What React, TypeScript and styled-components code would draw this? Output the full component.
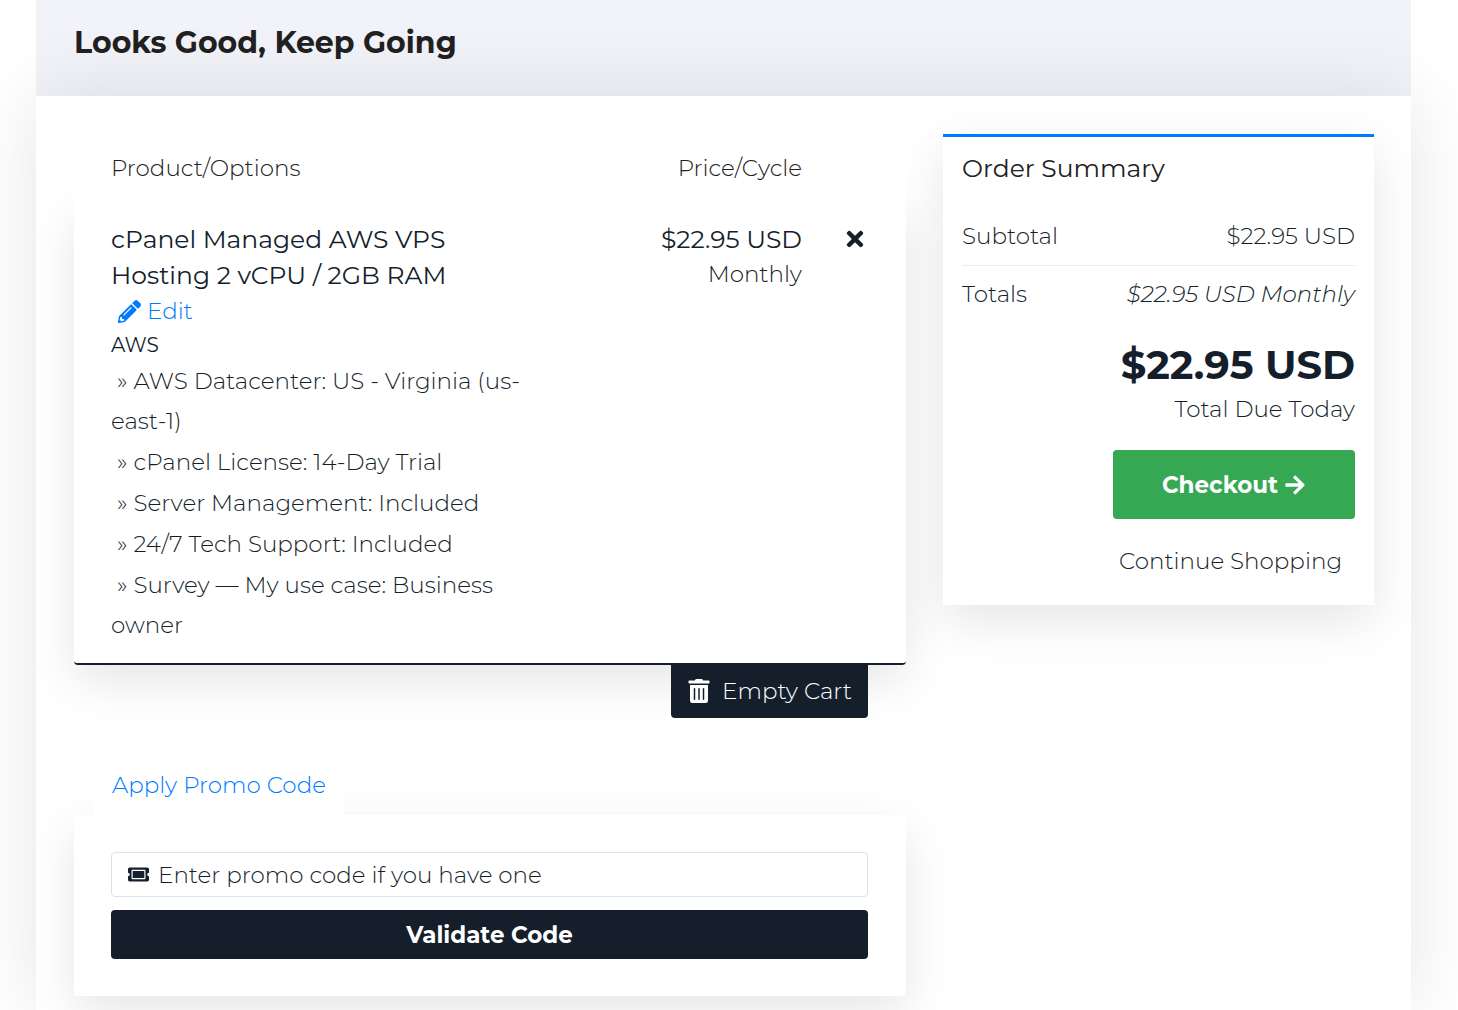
import React from "react";
import styled, { createGlobalStyle } from "styled-components";
import {
  FaArrowRight,
  FaPencilAlt,
  FaTicketAlt,
  FaTimes,
  FaTrashAlt,
} from "react-icons/fa";

const ink = "#151f2c";
const blue = "#007bff";
const cardShadow = "0 16px 48px rgba(0, 0, 0, 0.1)";

const GlobalStyle = createGlobalStyle`
  *, *::before, *::after { box-sizing: border-box; }
  html { overflow-x: hidden; }
  body {
    margin: 0;
    background: #fff;
    color: ${ink};
    font-family: Montserrat, Inter, "Open Sans", sans-serif;
    font-size: 23px;
    font-weight: 300;
    line-height: 34px;
  }
  h1, h2, h3, p, ul, dl, dd { margin: 0; padding: 0; }
  button, input { font: inherit; color: inherit; }
  svg { display: block; flex: none; }
`;

const Page = styled.div`
  min-height: 100vh;
  padding: 0 47px 0 36px;
  display: flex;
  flex-direction: column;
  overflow: hidden;
`;

const PageHeader = styled.header`
  padding: 25px 38px 35px;
  background: #f1f3f8;
`;

const PageTitle = styled.h1`
  font-size: 30px;
  font-weight: 700;
  line-height: 36px;
  color: #212121;
`;

const Body = styled.main`
  flex: 1;
  display: grid;
  grid-template-columns: minmax(0, 832fr) minmax(0, 431fr);
  gap: 37px;
  align-items: start;
  padding: 38px 37px 14px 38px;
  background: #fff;
  box-shadow: 0 0 72px rgba(0, 0, 0, 0.1);
  @media (max-width: 900px) {
    grid-template-columns: minmax(0, 1fr);
  }
`;

const CartColumn = styled.section`
  display: flex;
  flex-direction: column;
`;

const CartTable = styled.table`
  display: block;
`;

const CartHead = styled.thead`
  display: block;
  position: relative;
  z-index: 1;
  background: #fff;
`;

const CartBody = styled.tbody`
  display: block;
  border-bottom: 2px solid ${ink};
  border-radius: 4px;
  background: #fff;
  box-shadow: ${cardShadow};
`;

const CartRow = styled.tr<{ $pad: string }>`
  display: grid;
  grid-template-columns: minmax(0, 415fr) minmax(0, 276fr) 67px;
  padding: ${(p) => p.$pad};
`;

const HeadCell = styled.th<{ $end?: boolean }>`
  padding: 0;
  font-weight: 300;
  text-align: ${(p) => (p.$end ? "right" : "left")};
  color: #212121;
`;

const Cell = styled.td<{ $end?: boolean }>`
  padding: 0;
  text-align: ${(p) => (p.$end ? "right" : "left")};
`;

const ProductName = styled.h2`
  font-size: 25px;
  font-weight: 400;
  line-height: 36px;
`;

const Price = styled.div`
  font-size: 25px;
  font-weight: 400;
  line-height: 36px;
`;

const EditLink = styled.a`
  display: inline-flex;
  align-items: center;
  gap: 6px;
  padding-left: 7px;
  line-height: 36px;
  vertical-align: top;
  color: ${blue};
  text-decoration: none;
`;

const Group = styled.p`
  font-size: 20px;
  font-weight: 400;
  line-height: 32px;
`;

const Options = styled.ul`
  display: flex;
  flex-direction: column;
  gap: 1px;
  list-style: none;
  line-height: 40px;
  li::before {
    content: "»";
    padding: 0 6px;
  }
`;

const RemoveButton = styled.button`
  display: flex;
  margin-left: auto;
  padding: 6px 2px;
  border: 0;
  background: none;
  font-size: 24px;
  cursor: pointer;
`;

const EmptyButton = styled.button`
  display: flex;
  align-items: center;
  justify-content: center;
  gap: 11px;
  align-self: flex-end;
  width: 197px;
  margin-right: 38px;
  padding: 9px 0 10px;
  border: 0;
  border-radius: 0 0 4px 4px;
  position: relative;
  background: ${ink};
  color: #fff;
  cursor: pointer;
`;

const PromoTab = styled.a`
  position: relative;
  z-index: 1;
  align-self: flex-start;
  margin: 37px 0 0 19px;
  padding: 13px 18px 13px 19px;
  background: #fff;
  color: ${blue};
  text-decoration: none;
`;

const PromoCard = styled.form`
  display: flex;
  flex-direction: column;
  gap: 13px;
  padding: 37px 38px 37px 37px;
  border-radius: 4px;
  background: #fff;
  box-shadow: ${cardShadow};
`;

const PromoField = styled.label`
  display: flex;
  align-items: center;
  gap: 9px;
  height: 45px;
  padding: 0 16px;
  border: 1px solid #dee2e6;
  border-radius: 4px;
`;

const PromoInput = styled.input`
  flex: 1;
  min-width: 0;
  padding: 0;
  border: 0;
  outline: 0;
  background: none;
  &::placeholder {
    color: ${ink};
    opacity: 1;
  }
`;

const ValidateButton = styled.button`
  height: 49px;
  padding: 0;
  border: 0;
  border-radius: 4px;
  background: ${ink};
  color: #fff;
  font-weight: 700;
  cursor: pointer;
`;

const Summary = styled.aside`
  display: flex;
  flex-direction: column;
  padding: 13px 19px 27px;
  border-top: 3px solid ${blue};
  background: #fff;
  box-shadow: ${cardShadow};
`;

const SummaryTitle = styled.h2`
  margin-bottom: 21px;
  font-size: 25px;
  font-weight: 400;
  line-height: 36px;
  color: #212121;
`;

const SummaryLine = styled.dl<{ $ruled?: boolean }>`
  display: flex;
  justify-content: space-between;
  padding: ${(p) => (p.$ruled ? "12px 0" : "11px 0")};
  border-bottom: ${(p) => (p.$ruled ? "1px solid #ebebeb" : "0")};
`;

const Recurring = styled.em`
  font-style: italic;
`;

const TotalDue = styled.div`
  padding-top: 16px;
  text-align: right;
`;

const TotalAmount = styled.div`
  font-size: 40px;
  font-weight: 700;
  line-height: 54px;
`;

const Actions = styled.div`
  display: flex;
  flex-direction: column;
  align-self: flex-end;
  width: 242px;
  padding-top: 24px;
  gap: 25px;
`;

const CheckoutButton = styled.button`
  display: flex;
  align-items: center;
  justify-content: center;
  gap: 6px;
  height: 69px;
  padding: 0;
  border: 0;
  border-radius: 4px;
  background: #36a853;
  color: #fff;
  font-weight: 700;
  cursor: pointer;
`;

const ContinueLink = styled.a`
  padding: 0 16px 0 6px;
  white-space: nowrap;
  color: inherit;
  text-decoration: none;
`;

const options = [
  "AWS Datacenter: US - Virginia (us-east-1)",
  "cPanel License: 14-Day Trial",
  "Server Management: Included",
  "24/7 Tech Support: Included",
  "Survey — My use case: Business owner",
];

export default function App() {
  return (
    <>
      <GlobalStyle />
      <Page>
        <PageHeader>
          <PageTitle>Looks Good, Keep Going</PageTitle>
        </PageHeader>
        <Body>
          <CartColumn>
            <CartTable>
              <CartHead>
                <CartRow $pad="17px 37px 20px">
                  <HeadCell scope="col">Product/Options</HeadCell>
                  <HeadCell scope="col" $end>
                    Price/Cycle
                  </HeadCell>
                </CartRow>
              </CartHead>
              <CartBody>
                <CartRow $pad="16px 37px 18px">
                  <Cell>
                    <ProductName>
                      cPanel Managed AWS VPS Hosting 2 vCPU / 2GB RAM
                    </ProductName>
                    <EditLink href="#edit">
                      <FaPencilAlt size={23} />
                      Edit
                    </EditLink>
                    <Group>AWS</Group>
                    <Options>
                      {options.map((option) => (
                        <li key={option}>{option}</li>
                      ))}
                    </Options>
                  </Cell>
                  <Cell $end>
                    <Price>$22.95 USD</Price>
                    Monthly
                  </Cell>
                  <Cell>
                    <RemoveButton type="button" aria-label="Remove item">
                      <FaTimes />
                    </RemoveButton>
                  </Cell>
                </CartRow>
              </CartBody>
            </CartTable>
            <EmptyButton type="button">
              <FaTrashAlt size={24} />
              Empty Cart
            </EmptyButton>

            <PromoTab href="#promo">Apply Promo Code</PromoTab>
            <PromoCard id="promo" onSubmit={(e) => e.preventDefault()}>
              <PromoField>
                <FaTicketAlt size={21} />
                <PromoInput
                  type="text"
                  name="promocode"
                  aria-label="Promo code"
                  placeholder="Enter promo code if you have one"
                />
              </PromoField>
              <ValidateButton type="submit">Validate Code</ValidateButton>
            </PromoCard>
          </CartColumn>

          <Summary>
            <SummaryTitle>Order Summary</SummaryTitle>
            <SummaryLine $ruled>
              <dt>Subtotal</dt>
              <dd>$22.95 USD</dd>
            </SummaryLine>
            <SummaryLine>
              <dt>Totals</dt>
              <dd>
                <Recurring>$22.95 USD Monthly</Recurring>
              </dd>
            </SummaryLine>
            <TotalDue>
              <TotalAmount>$22.95 USD</TotalAmount>
              Total Due Today
            </TotalDue>
            <Actions>
              <CheckoutButton type="button">
                Checkout
                <FaArrowRight size={22} />
              </CheckoutButton>
              <ContinueLink href="#shop">Continue Shopping</ContinueLink>
            </Actions>
          </Summary>
        </Body>
      </Page>
    </>
  );
}
